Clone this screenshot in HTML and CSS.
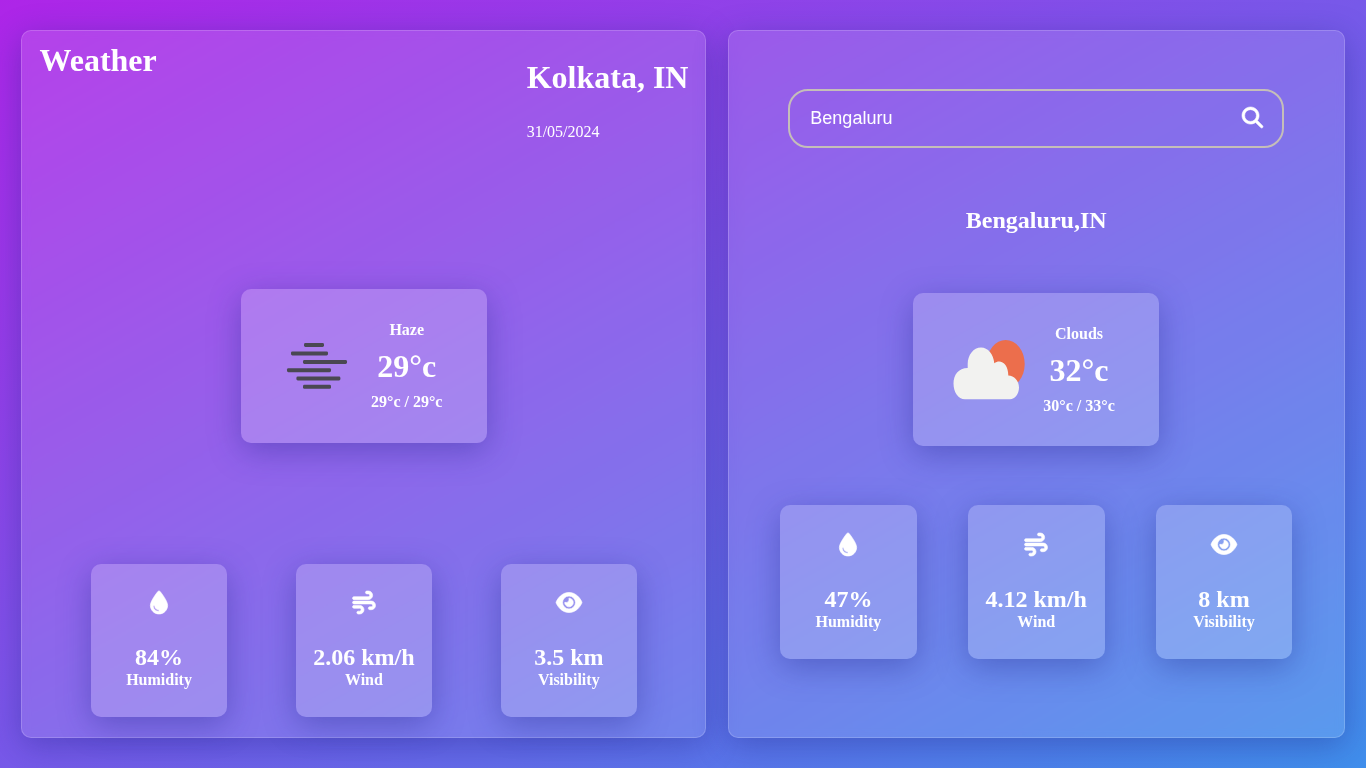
FILE: index.html
```html
<!DOCTYPE html>
<html lang="en">
<head>
<meta charset="utf-8">
<meta name="viewport" content="width=device-width, initial-scale=1">
<title>Weather</title>
<link rel="stylesheet" href="styles.css">
</head>
<body>
<svg class="sprite" aria-hidden="true">
  <symbol id="drop" viewBox="0 0 384 512" overflow="visible"><path d="M192 512C86 512 0 426 0 320C0 228.8 130.2 57.7 166.6 11.7C172.6 4.2 181.5 0 191.1 0h1.8c9.6 0 18.5 4.2 24.5 11.7C253.8 57.7 384 228.8 384 320c0 106-86 192-192 192zM96 336c0-8.8-7.2-16-16-16s-16 7.2-16 16c0 61.9 50.1 112 112 112c8.8 0 16-7.2 16-16s-7.2-16-16-16c-44.2 0-80-35.8-80-80z"/></symbol>
  <symbol id="wind" viewBox="0 0 512 512" overflow="visible"><path d="M288 32c0 17.7 14.3 32 32 32h32c17.7 0 32 14.3 32 32s-14.3 32-32 32H32c-17.7 0-32 14.3-32 32s14.3 32 32 32H352c53 0 96-43 96-96s-43-96-96-96H320c-17.7 0-32 14.3-32 32zm64 352c0 17.7 14.3 32 32 32h32c53 0 96-43 96-96s-43-96-96-96H32c-17.7 0-32 14.3-32 32s14.3 32 32 32H416c17.7 0 32 14.3 32 32s-14.3 32-32 32H384c-17.7 0-32 14.3-32 32zM128 512h32c53 0 96-43 96-96s-43-96-96-96H32c-17.7 0-32 14.3-32 32s14.3 32 32 32H160c17.7 0 32 14.3 32 32s-14.3 32-32 32H128c-17.7 0-32 14.3-32 32s14.3 32 32 32z"/></symbol>
  <symbol id="eye" viewBox="0 0 576 512" overflow="visible"><path d="M288 32c-80.8 0-145.5 36.8-192.6 80.6C48.6 156 17.3 208 2.5 243.7c-3.3 7.9-3.3 16.7 0 24.6C17.3 304 48.6 356 95.4 399.4C142.5 443.2 207.2 480 288 480s145.5-36.8 192.6-80.6c46.8-43.5 78.1-95.4 93-131.1c3.3-7.9 3.3-16.7 0-24.6c-14.9-35.7-46.2-87.7-93-131.1C433.5 68.8 368.8 32 288 32zM144 256a144 144 0 1 1 288 0 144 144 0 1 1 -288 0zm144-64c0 35.3-28.7 64-64 64c-7.1 0-13.9-1.2-20.3-3.3c-5.5-1.8-11.9 1.6-11.7 7.4c.3 6.9 1.3 13.8 3.2 20.7c13.7 51.2 66.4 81.6 117.6 67.9s81.6-66.4 67.9-117.6c-11.1-41.5-47.8-69.4-88.6-71.1c-5.8-.2-9.2 6.1-7.4 11.7c2.1 6.4 3.3 13.2 3.3 20.3z"/></symbol>
  <symbol id="search" viewBox="0 0 512 512" overflow="visible"><path d="M416 208c0 45.9-14.9 88.3-40 122.7L502.6 457.4c12.5 12.5 12.5 32.8 0 45.3s-32.8 12.5-45.3 0L330.7 376c-34.4 25.2-76.8 40-122.7 40C93.1 416 0 322.9 0 208S93.1 0 208 0S416 93.1 416 208zM208 352a144 144 0 1 0 0-288 144 144 0 1 0 0 288z"/></symbol>
</svg>
<main class="app">
  <section class="panel panel-current">
    <header class="panel-head">
      <h1 class="title">Weather</h1>
      <div class="location">
        <h2 class="title">Kolkata, IN</h2>
        <p class="date">31/05/2024</p>
      </div>
    </header>
    <article class="card summary">
      <svg class="condition" viewBox="0 0 100 100" role="img" aria-label="Haze">
        <g fill="#4a4853">
          <rect x="37" y="27" width="20" height="4" rx="1.4"/>
          <rect x="24" y="35.4" width="37" height="4" rx="1.4"/>
          <rect x="36" y="44" width="44" height="4" rx="1.4"/>
          <rect x="20" y="52.2" width="44" height="4" rx="1.4"/>
          <rect x="29.4" y="60.5" width="44" height="4" rx="1.4"/>
          <rect x="36" y="68.8" width="28" height="4" rx="1.4"/>
        </g>
      </svg>
      <div class="readings">
        <p class="label">Haze</p>
        <p class="temp">29°c</p>
        <p class="label">29°c / 29°c</p>
      </div>
    </article>
    <div class="stats">
      <article class="card stat"><svg class="stat-icon"><use href="#drop"/></svg><p class="value">84%</p><p class="label">Humidity</p></article>
      <article class="card stat"><svg class="stat-icon"><use href="#wind"/></svg><p class="value">2.06 km/h</p><p class="label">Wind</p></article>
      <article class="card stat"><svg class="stat-icon"><use href="#eye"/></svg><p class="value">3.5 km</p><p class="label">Visibility</p></article>
    </div>
  </section>
  <section class="panel panel-search">
    <form class="search" onsubmit="return false">
      <input class="search-input" type="text" value="Bengaluru" aria-label="City">
      <button class="search-button" type="submit" aria-label="Search"><svg class="search-icon"><use href="#search"/></svg></button>
    </form>
    <h2 class="value">Bengaluru,IN</h2>
    <article class="card summary">
      <svg class="condition" viewBox="0 0 100 100" role="img" aria-label="Clouds">
        <ellipse cx="66.7" cy="44" rx="19" ry="24" fill="#ec6e4c"/>
        <path fill="#f2f2f0" d="M26 79.3C19 79.3 14.5 72 14.5 63.5C14.5 55 19.5 48 28.7 48V44C28.7 35 34.5 27.5 42 27.5C49 27.5 54.5 34 55.3 43.3C61 38.5 69.3 43 69.3 55.5C75 55.5 80 60.5 80 67.5C80 74 76 79.3 71 79.3Z"/>
      </svg>
      <div class="readings">
        <p class="label">Clouds</p>
        <p class="temp">32°c</p>
        <p class="label">30°c / 33°c</p>
      </div>
    </article>
    <div class="stats">
      <article class="card stat"><svg class="stat-icon"><use href="#drop"/></svg><p class="value">47%</p><p class="label">Humidity</p></article>
      <article class="card stat"><svg class="stat-icon"><use href="#wind"/></svg><p class="value">4.12 km/h</p><p class="label">Wind</p></article>
      <article class="card stat"><svg class="stat-icon"><use href="#eye"/></svg><p class="value">8 km</p><p class="label">Visibility</p></article>
    </div>
  </section>
</main>
</body>
</html>
```
FILE: styles.css
```css
* {
  margin: 0;
  padding: 0;
}

body {
  color: #fff;
  font-family: "Liberation Serif", "Times New Roman", serif;
  font-size: 16px;
}

.sprite {
  display: none;
}

.app {
  display: flex;
  justify-content: space-evenly;
  align-items: center;
  min-height: 100vh;
  background: linear-gradient(to right bottom, #ae25e8, #7759e9, #408fec);
}

.panel {
  display: flex;
  flex-direction: column;
  align-items: center;
  min-height: 92vh;
  border: 1px solid rgba(255, 255, 255, 0.18);
  border-radius: 10px;
  background: rgba(255, 255, 255, 0.12);
  box-shadow: 0 8px 32px 0 rgba(31, 38, 135, 0.37);
  backdrop-filter: blur(4px);
}

.panel-current {
  width: 50%;
  justify-content: space-between;
}

.panel-search {
  width: 45%;
  justify-content: space-evenly;
}

.panel-head {
  display: flex;
  justify-content: space-between;
  align-self: stretch;
  padding: 0 17px;
}

.panel-head > .title {
  padding-top: 11px;
}

.location {
  display: grid;
  gap: 28px;
  padding: 28px 0;
}

.title,
.temp {
  font-size: 32px;
  font-weight: bold;
  line-height: 36px;
}

.date {
  line-height: 18px;
}

.label {
  font-weight: bold;
  line-height: 18px;
}

.value {
  font-size: 24px;
  font-weight: bold;
  line-height: 27px;
}

.card {
  display: flex;
  align-items: center;
  min-height: 20vh;
  border-radius: 10px;
  background: rgba(255, 255, 255, 0.2);
  box-shadow: 0 8px 32px 0 rgba(31, 38, 135, 0.37);
}

.summary {
  box-sizing: border-box;
  width: 18vw;
  padding-left: 26px;
  gap: 4px;
}

.condition {
  flex: none;
  width: 100px;
  height: 100px;
}

.readings {
  display: grid;
  gap: 9px;
  text-align: center;
}

.stats {
  display: flex;
  justify-content: space-evenly;
  align-self: stretch;
  margin-bottom: 20px;
}

.stat {
  flex-direction: column;
  justify-content: center;
  width: 10vw;
}

.stat-icon {
  width: 26px;
  height: 23px;
  margin-bottom: 30px;
  overflow: visible;
  fill: #fff;
  stroke: #fff;
  stroke-width: 14;
}

.search {
  display: flex;
  align-items: center;
  width: 80%;
  border: 2px solid #c5beb9;
  border-radius: 20px;
}

.search-input {
  flex: 1;
  min-width: 0;
  padding: 17px 20px;
  border: 0;
  outline: 0;
  background: transparent;
  color: #fff;
  font: 18px/21px "Liberation Sans", Arial, sans-serif;
}

.search-button {
  padding: 0 19px 2px;
  border: 0;
  background: transparent;
  cursor: pointer;
}

.search-icon {
  display: block;
  width: 21px;
  height: 21px;
  overflow: visible;
  fill: #fff;
  stroke: #fff;
  stroke-width: 14;
}
```
